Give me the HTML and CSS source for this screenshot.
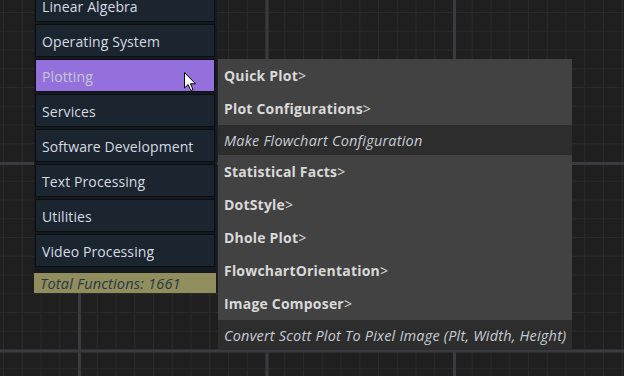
FILE: index.html
```html
<!DOCTYPE html>
<html lang="en">
<head>
  <meta charset="UTF-8">
  <meta name="viewport" content="width=device-width, initial-scale=1.0">
  <title>Function Browser</title>
  <link rel="stylesheet" href="styles.css">
</head>
<body>
  <div class="workspace">
    <aside class="categories">
      <div class="category">Linear Algebra</div>
      <div class="category">Operating System</div>
      <div class="category active">Plotting</div>
      <div class="category">Services</div>
      <div class="category">Software Development</div>
      <div class="category">Text Processing</div>
      <div class="category">Utilities</div>
      <div class="category">Video Processing</div>
      <div class="total">Total Functions: 1661</div>
    </aside>

    <div class="submenu">
      <div class="entry group">Quick Plot<span class="arrow">&gt;</span></div>
      <div class="entry group">Plot Configurations<span class="arrow">&gt;</span></div>
      <div class="entry func">Make Flowchart Configuration</div>
      <div class="entry group">Statistical Facts<span class="arrow">&gt;</span></div>
      <div class="entry group">DotStyle<span class="arrow">&gt;</span></div>
      <div class="entry group">Dhole Plot<span class="arrow">&gt;</span></div>
      <div class="entry group">FlowchartOrientation<span class="arrow">&gt;</span></div>
      <div class="entry group">Image Composer<span class="arrow">&gt;</span></div>
      <div class="entry func">Convert Scott Plot To Pixel Image (Plt, Width, Height)</div>
    </div>

    <svg class="cursor" width="13" height="20" viewBox="0 0 13 20">
      <path d="M0.5 0.5 L0.5 16 L4.2 12.5 L6.8 18.5 L9 17.5 L6.5 11.8 L11.5 11.8 Z" fill="#ffffff" stroke="#000000" stroke-width="1"/>
    </svg>
  </div>
</body>
</html>
```

FILE: styles.css
```css
body {
  margin: 0;
  height: 376px;
  overflow: hidden;
  font-family: "Open Sans", "Noto Sans", sans-serif;
  background-color: #1f1f1f;
  background-image:
    linear-gradient(90deg, #3b3b3f 3px, transparent 3px),
    linear-gradient(#3b3b3f 3px, transparent 3px),
    linear-gradient(90deg, #2a2a2a 1px, transparent 1px),
    linear-gradient(#2a2a2a 1px, transparent 1px);
  background-size: 187.5px 187.5px, 187.5px 187.5px, 18.75px 18.75px, 18.75px 18.75px;
  background-position: 78px 0, 0 162px, 3px 0, 0 12px;
}

.workspace {
  position: relative;
  display: flow-root;
  height: 376px;
}

.categories {
  width: 180px;
  margin-left: 34px;
  margin-top: -11px;
  padding: 0 2px 0 1px;
  background-color: #151a20;
  display: flex;
  flex-direction: column;
  gap: 2px;
}

.category {
  height: 33px;
  box-sizing: border-box;
  border: 1px solid #0b0f13;
  background-color: #1b2530;
  color: #d5dbe1;
  font-size: 14px;
  letter-spacing: 0.1px;
  padding: 2px 0 0 6px;
  display: flex;
  align-items: center;
}

.category.active {
  background-color: #9370db;
  color: #c9c6d8;
}

.total {
  margin: 4px -1px 0 -1px;
  height: 20px;
  background-color: #908e5d;
  color: #283648;
  font-style: italic;
  font-size: 14.5px;
  letter-spacing: 0.2px;
  padding-left: 6px;
  display: flex;
  align-items: center;
}

.submenu {
  position: absolute;
  left: 218px;
  top: 59px;
  width: 354px;
  background-color: #424242;
}

.entry {
  padding-left: 6px;
  display: flex;
  align-items: center;
  font-size: 14px;
  white-space: nowrap;
}

.entry.group {
  height: 33px;
  font-weight: bold;
  letter-spacing: 0.2px;
  color: #d9d9d9;
}

.entry.func {
  height: 30px;
  font-style: italic;
  font-size: 14.5px;
  letter-spacing: 0.2px;
  color: #c6ccd4;
  background-color: #2d2d2d;
}

.arrow {
  font-weight: normal;
}

.cursor {
  position: absolute;
  left: 184px;
  top: 72px;
}
```
